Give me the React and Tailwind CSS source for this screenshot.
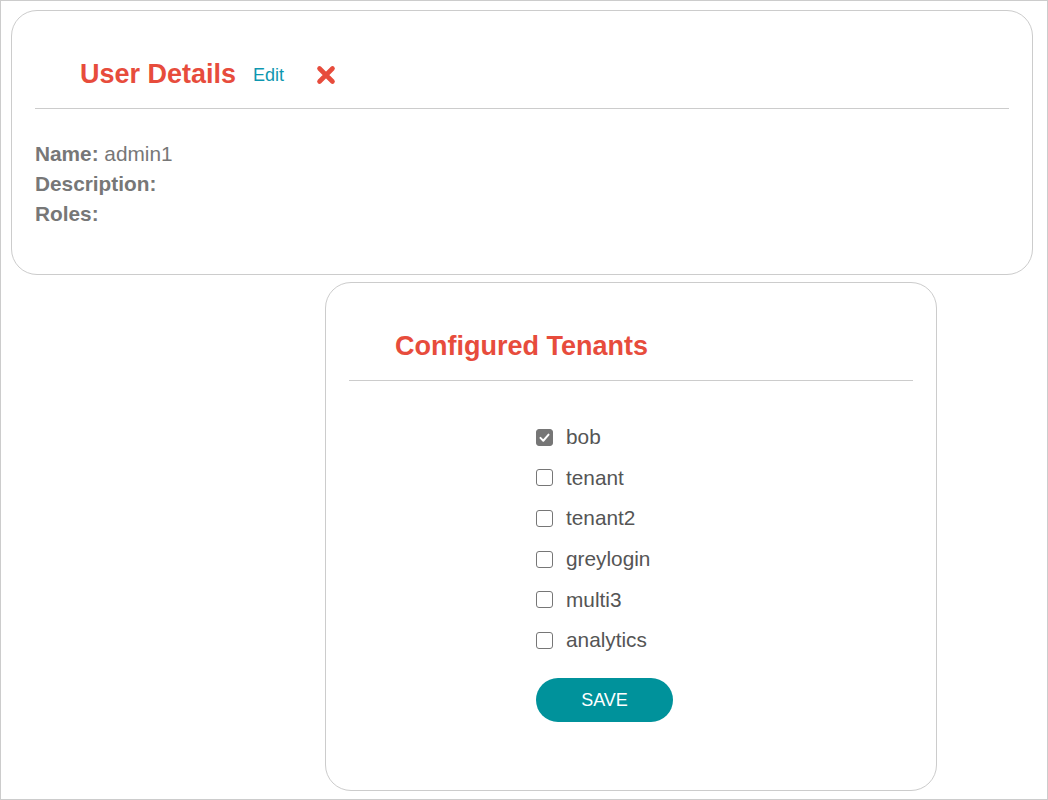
import { useState } from 'react';

const tenants = ['bob', 'tenant', 'tenant2', 'greylogin', 'multi3', 'analytics'];

function Checkbox({ checked, onClick }) {
  return (
    <span
      onClick={onClick}
      className={`flex h-[17px] w-[17px] items-center justify-center rounded-[3px] border-[1.5px] border-[#767676] ${checked ? 'bg-[#767676]' : 'bg-white'}`}
    >
      {checked && (
        <svg viewBox="0 0 16 16" className="h-[13px] w-[13px]">
          <path d="M3 8.5 L6.5 12 L13 4.5" fill="none" stroke="white" strokeWidth="2.4" strokeLinecap="round" strokeLinejoin="round" />
        </svg>
      )}
    </span>
  );
}

export default function App() {
  const [selected, setSelected] = useState(['bob']);

  const toggle = (name) => {
    setSelected(selected.includes(name) ? selected.filter(t => t !== name) : [...selected, name]);
  };

  return (
    <div className="box-border h-[800px] w-[1048px] overflow-hidden border border-[#cccccc] bg-white font-['Liberation_Sans',Arial,sans-serif]">
      <div className="ml-[10px] mt-[9px] box-border h-[265px] w-[1022px] rounded-[26px] border border-[#cccccc] px-[23px]">
        <div className="flex items-center border-b border-[#cccccc] pb-[20px] pl-[45px] pt-[49px]">
          <h1 className="text-[27px] font-bold leading-[28px] text-[#e74c3c]">User Details</h1>
          <a className="ml-[17px] mt-[2px] text-[18px] leading-[20px] text-[#0e97b0]">Edit</a>
          <svg viewBox="0 0 20 20" className="ml-[32px] mt-[1px] h-[20px] w-[20px]">
            <path d="M3.5 3.5 L16.5 16.5 M16.5 3.5 L3.5 16.5" stroke="#e74c3c" strokeWidth="4.6" strokeLinecap="round" />
          </svg>
        </div>
        <div className="mt-[30px] text-[20.8px] leading-[30px] text-[#777777]">
          <div><span className="font-bold">Name:</span> admin1</div>
          <div><span className="font-bold">Description:</span></div>
          <div><span className="font-bold">Roles:</span></div>
        </div>
      </div>

      <div className="ml-[324px] mt-[7px] box-border h-[509px] w-[612px] rounded-[26px] border border-[#cccccc] px-[23px]">
        <div className="border-b border-[#cccccc] pb-[20px] pl-[46px] pt-[49px]">
          <h2 className="text-[27px] font-bold leading-[28px] text-[#e74c3c]">Configured Tenants</h2>
        </div>
        <div className="ml-[187px] mt-[36px]">
          {tenants.map(t => (
            <div key={t} className="flex h-[40.6px] items-center">
              <Checkbox checked={selected.includes(t)} onClick={() => toggle(t)} />
              <span className="ml-[13px] text-[20.8px] leading-[22px] text-[#555555]">{t}</span>
            </div>
          ))}
          <button className="mt-[17px] h-[44px] w-[137px] rounded-full bg-[#00929b] text-[18px] leading-[20px] text-white">SAVE</button>
        </div>
      </div>
    </div>
  );
}
